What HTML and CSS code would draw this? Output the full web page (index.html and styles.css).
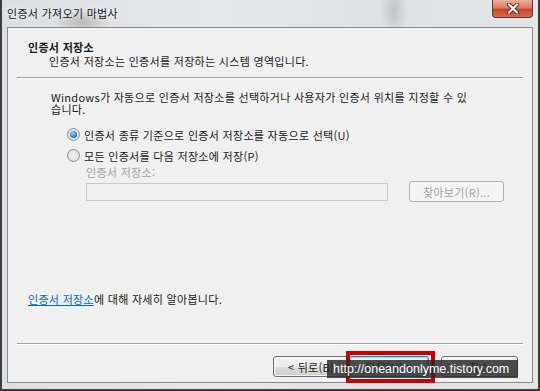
FILE: index.html
```html
<!DOCTYPE html>
<html lang="ko">
<head>
    <meta charset="UTF-8">
    <title>인증서 가져오기 마법사</title>
    <link rel="stylesheet" href="styles.css">
</head>
<body>
<div class="window">
    <div class="titlebar">
        <span class="title">인증서 가져오기 마법사</span>
        <button class="close" aria-label="닫기">
            <svg width="14" height="11" viewBox="0 0 14 11">
                <path d="M3 1.5 L11 9.5 M11 1.5 L3 9.5" stroke="#5a2a20" stroke-width="4" stroke-linecap="round"/>
                <path d="M3 1.5 L11 9.5 M11 1.5 L3 9.5" stroke="#ffffff" stroke-width="2.2" stroke-linecap="round"/>
            </svg>
        </button>
    </div>

    <div class="client">
        <div class="page">
            <div class="wiz-head">
                <div class="wiz-title">인증서 저장소</div>
                <div class="wiz-sub">인증서 저장소는 인증서를 저장하는 시스템 영역입니다.</div>
            </div>
            <div class="rule"></div>

            <div class="content">
                <p class="intro">Windows가 자동으로 인증서 저장소를 선택하거나 사용자가 인증서 위치를 지정할 수 있<br>습니다.</p>

                <div class="options">
                    <label class="radio-row">
                        <span class="radio checked"></span>
                        인증서 종류 기준으로 인증서 저장소를 자동으로 선택(U)
                    </label>
                    <label class="radio-row">
                        <span class="radio"></span>
                        모든 인증서를 다음 저장소에 저장(P)
                    </label>
                    <div class="store">
                        <div class="store-label">인증서 저장소:</div>
                        <div class="store-row">
                            <div class="store-input"></div>
                            <button class="btn disabled">찾아보기(R)...</button>
                        </div>
                    </div>
                </div>
            </div>
        </div>

        <div class="learn"><a href="#">인증서 저장소</a>에 대해 자세히 알아봅니다.</div>
        <div class="rule"></div>

        <div class="buttons">
            <button class="btn nav">&lt; 뒤로(B)</button>
            <button class="btn nav next">다음(N) &gt;</button>
            <button class="btn nav cancel">취소</button>
        </div>
    </div>

    <div class="highlight"></div>
    <div class="watermark">http://oneandonlyme.tistory.com</div>
</div>
</body>
</html>
```

FILE: styles.css
```css
* {
    box-sizing: border-box;
}

body {
    margin: 0;
    font-family: "Noto Sans CJK KR", "Noto Sans", sans-serif;
    font-size: 11px;
    letter-spacing: 0.3px;
    color: #1a1a1a;
}

.window {
    position: relative;
    width: 540px;
    height: 391px;
    display: flex;
    flex-direction: column;
    background:
        radial-gradient(ellipse 30px 14px at 80px 22px, rgba(120, 110, 90, 0.35), transparent),
        radial-gradient(ellipse 14px 30px at 392px 10px, rgba(140, 140, 140, 0.35), transparent),
        linear-gradient(90deg, #dcdfe2, #e6e8ea 40%, #dfe2e5 70%, #e3e5e7);
    border-left: 2px solid #3c3c3c;
    border-right: 2px solid #3c3c3c;
    border-bottom: 2px solid #3c3c3c;
}

.titlebar {
    height: 27px;
    display: flex;
    align-items: flex-start;
    padding-left: 5px;
}

.title {
    margin-top: 5px;
    color: #202020;
    text-shadow: 0 0 6px rgba(255, 255, 255, 0.9);
}

.close {
    margin-left: auto;
    margin-right: 5px;
    width: 41px;
    height: 18px;
    padding: 0;
    border: 1px solid #6e3326;
    border-top: none;
    border-radius: 0 0 4px 4px;
    background: linear-gradient(#eab1a2, #dd7a62 45%, #c8452c 55%, #d56a4e);
    display: flex;
    align-items: center;
    justify-content: center;
}

.client {
    margin: 0 5px 6px;
    flex: 1;
    display: flex;
    flex-direction: column;
    background: #f0f0f0;
    border: 1px solid #868b91;
}

.page {
    flex: 1;
}

.wiz-head {
    padding: 12px 0 0 20px;
}

.wiz-title {
    font-weight: bold;
    line-height: 14px;
}

.wiz-sub {
    padding-left: 21px;
    line-height: 15px;
}

.rule {
    margin: 8px 9px 0;
    height: 2px;
    border-top: 1px solid #a0a0a0;
    border-bottom: 1px solid #ffffff;
}

.content {
    padding: 12px 0 0 43px;
}

.intro {
    margin: 0;
    line-height: 12px;
}

.options {
    margin-top: 9px;
    padding-left: 16px;
}

.radio-row {
    height: 21px;
    display: flex;
    align-items: center;
    gap: 4px;
}

.radio {
    width: 13px;
    height: 13px;
    border-radius: 50%;
    border: 1px solid #8a8c8e;
    background: radial-gradient(circle at 50% 50%, #f4f4f4, #d8d8d8);
    display: flex;
    align-items: center;
    justify-content: center;
}

.radio.checked::after {
    content: "";
    width: 7px;
    height: 7px;
    border-radius: 50%;
    background: radial-gradient(circle at 40% 35%, #8fd2ff, #1a6fc2 70%, #0d4f98);
}

.store {
    padding-left: 19px;
}

.store-label {
    line-height: 12px;
    color: #a2a2a2;
}

.store-row {
    margin-top: 3px;
    display: flex;
    align-items: center;
    gap: 21px;
}

.store-input {
    width: 302px;
    height: 18px;
    background: #f0f0f0;
    border: 1px solid #c9c9c9;
}

.btn {
    font-family: inherit;
    font-size: 11px;
    letter-spacing: 0.3px;
    height: 21px;
    padding: 0;
    border: 1px solid #707070;
    border-radius: 3px;
    background: linear-gradient(#f3f3f3, #ebebeb 50%, #dddddd 51%, #cfcfcf);
    color: #1a1a1a;
    box-shadow: inset 0 0 0 1px rgba(255, 255, 255, 0.7);
}

.btn.disabled {
    width: 95px;
    background: #f4f4f4;
    border-color: #adb2b5;
    color: #a0a0a0;
    box-shadow: none;
}

.learn {
    padding-left: 20px;
    line-height: 14px;
    margin-bottom: 37px;
}

.learn a {
    color: #0066cc;
}

.learn + .rule {
    margin-top: 0;
}

.buttons {
    display: flex;
    justify-content: flex-end;
    padding: 11px 14px 5px 0;
}

.nav {
    width: 76px;
}

.nav.next {
    width: 80px;
    border-color: #3c7fb1;
    box-shadow: inset 0 0 0 1px #9ad8f6;
    background: linear-gradient(#eaf6fd, #d9f0fc 50%, #bee6fd 51%, #a7d9f5);
}

.nav.cancel {
    width: 77px;
    margin-left: 12px;
}

.highlight {
    position: absolute;
    left: 344px;
    top: 351px;
    width: 89px;
    height: 32px;
    border: 4px solid #c80000;
}

.watermark {
    position: absolute;
    left: 325px;
    top: 360px;
    width: 191px;
    height: 18px;
    background: rgba(40, 40, 40, 0.82);
    color: #ffffff;
    font-family: "Liberation Sans", Arial, sans-serif;
    font-size: 12.5px;
    letter-spacing: 0;
    line-height: 18px;
    padding-left: 6px;
}
```
